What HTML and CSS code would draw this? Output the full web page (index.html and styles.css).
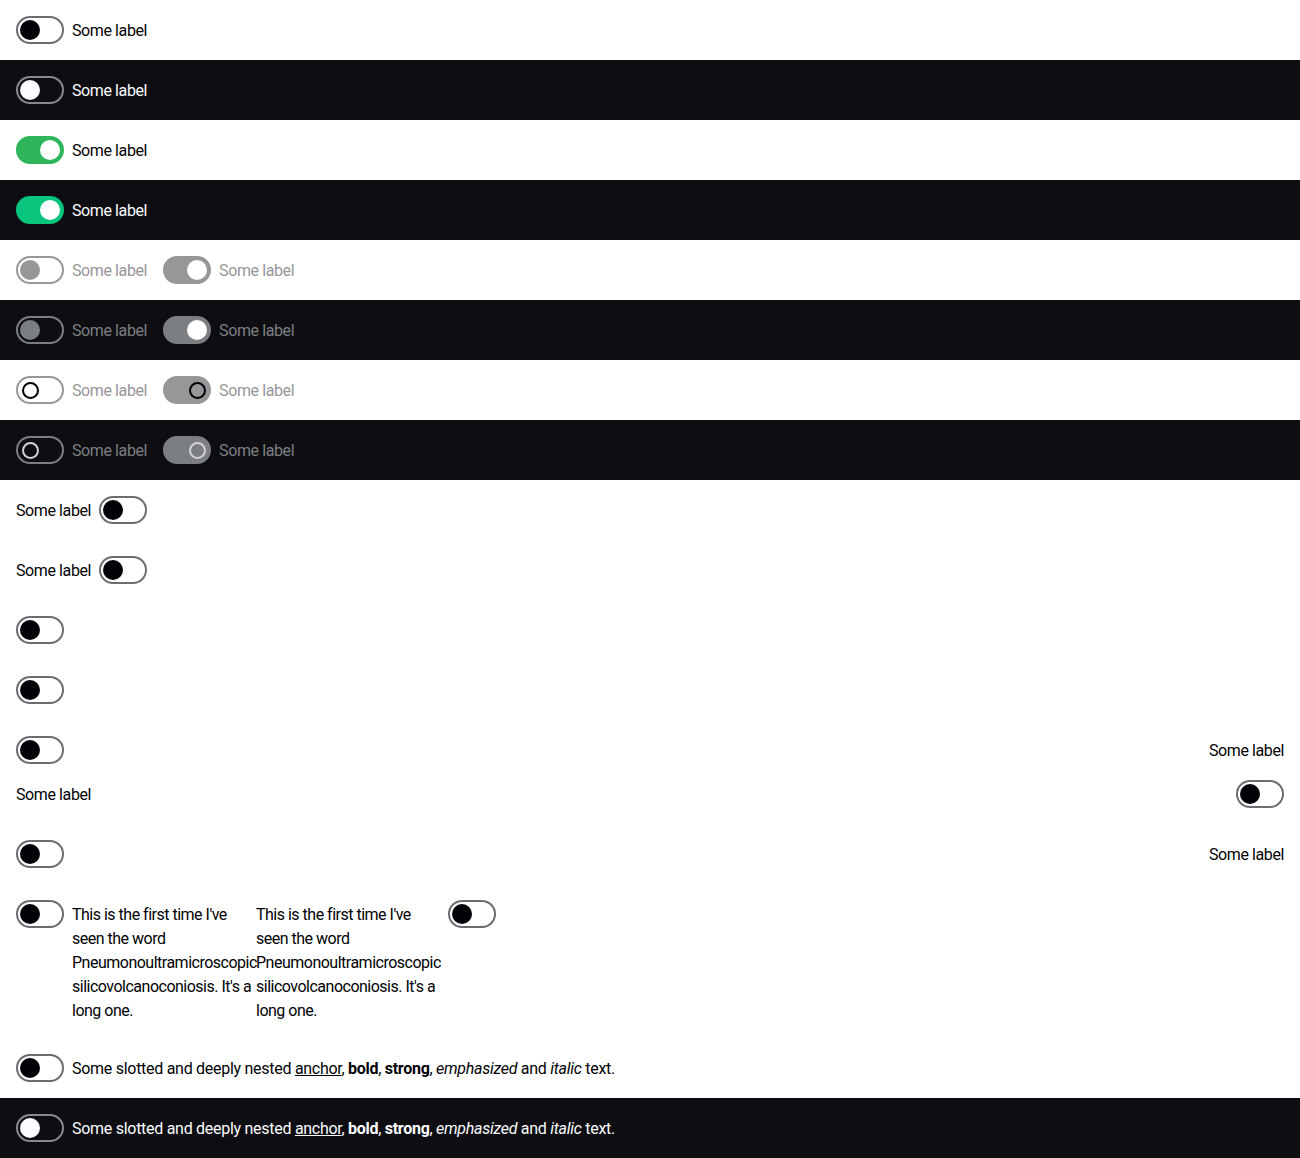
FILE: index.html
```html
<!DOCTYPE html>
<html lang="en">
<head>
<meta charset="utf-8">
<title>Switch</title>
<link rel="stylesheet" href="styles.css">
</head>
<body>
<div class="sec light">
  <label class="toggle"><span class="switch"><span class="knob"></span></span><span class="lbl">Some label</span></label>
</div>
<div class="sec dark">
  <label class="toggle"><span class="switch"><span class="knob"></span></span><span class="lbl">Some label</span></label>
</div>
<div class="sec light">
  <label class="toggle"><span class="switch on"><span class="knob"></span></span><span class="lbl">Some label</span></label>
</div>
<div class="sec dark">
  <label class="toggle"><span class="switch on"><span class="knob"></span></span><span class="lbl">Some label</span></label>
</div>
<div class="sec light">
  <label class="toggle disabled"><span class="switch"><span class="knob"></span></span><span class="lbl">Some label</span></label>
  <label class="toggle disabled"><span class="switch on"><span class="knob"></span></span><span class="lbl">Some label</span></label>
</div>
<div class="sec dark">
  <label class="toggle disabled"><span class="switch"><span class="knob"></span></span><span class="lbl">Some label</span></label>
  <label class="toggle disabled"><span class="switch on"><span class="knob"></span></span><span class="lbl">Some label</span></label>
</div>
<div class="sec light">
  <label class="toggle disabled loading"><span class="switch"><span class="knob"></span></span><span class="lbl">Some label</span></label>
  <label class="toggle disabled loading"><span class="switch on"><span class="knob"></span></span><span class="lbl">Some label</span></label>
</div>
<div class="sec dark">
  <label class="toggle disabled loading"><span class="switch"><span class="knob"></span></span><span class="lbl">Some label</span></label>
  <label class="toggle disabled loading"><span class="switch on"><span class="knob"></span></span><span class="lbl">Some label</span></label>
</div>
<div class="sec light">
  <label class="toggle"><span class="lbl">Some label</span><span class="switch"><span class="knob"></span></span></label>
</div>
<div class="sec light">
  <label class="toggle"><span class="lbl">Some label</span><span class="switch"><span class="knob"></span></span></label>
</div>
<div class="sec light">
  <label class="toggle" aria-label="Some label"><span class="switch"><span class="knob"></span></span></label>
</div>
<div class="sec light">
  <label class="toggle" aria-label="Some label"><span class="switch"><span class="knob"></span></span></label>
</div>
<div class="sec light col">
  <label class="toggle stretch"><span class="switch"><span class="knob"></span></span><span class="lbl">Some label</span></label>
  <label class="toggle stretch"><span class="lbl">Some label</span><span class="switch"><span class="knob"></span></span></label>
</div>
<div class="sec light">
  <label class="toggle stretch"><span class="switch"><span class="knob"></span></span><span class="lbl">Some label</span></label>
</div>
<div class="sec light tight">
  <label class="toggle"><span class="switch"><span class="knob"></span></span><span class="lbl narrow">This is the first time I've seen the word Pneumonoultramicroscopic silicovolcanoconiosis. It's a long one.</span></label>
  <label class="toggle"><span class="lbl narrow">This is the first time I've seen the word Pneumonoultramicroscopic silicovolcanoconiosis. It's a long one.</span><span class="switch"><span class="knob"></span></span></label>
</div>
<div class="sec light">
  <label class="toggle"><span class="switch"><span class="knob"></span></span><span class="lbl rich">Some slotted and deeply nested <a href="#">anchor</a>, <b>bold</b>, <strong>strong</strong>, <em>emphasized</em> and <i>italic</i> text.</span></label>
</div>
<div class="sec dark">
  <label class="toggle"><span class="switch"><span class="knob"></span></span><span class="lbl rich">Some slotted and deeply nested <a href="#">anchor</a>, <b>bold</b>, <strong>strong</strong>, <em>emphasized</em> and <i>italic</i> text.</span></label>
</div>
</body>
</html>
```

FILE: styles.css
```css
html, body {
  margin: 0;
  padding: 0;
  background: #ffffff;
}
body {
  font-family: Roboto, "Liberation Sans", Arial, sans-serif;
  font-size: 16px;
  line-height: 24px;
  letter-spacing: -0.4px;
}
.sec {
  display: flex;
  gap: 16px;
  padding: 16px;
  align-items: flex-start;
}
.sec.col {
  flex-direction: column;
}
.sec.tight {
  gap: 0;
}
.light {
  background: #ffffff;
  color: #010205;
  --border: #6b6d70;
  --knob: #010205;
  --on: #2fb65b;
  --onknob: #ffffff;
  --dis: #969799;
  --ring: #010205;
}
.dark {
  background: #0e0e12;
  color: #fbfcff;
  --border: #88898c;
  --knob: #fbfcff;
  --on: #09c47d;
  --onknob: #ffffff;
  --dis: #7c7f81;
  --ring: #d0d1d2;
}
.toggle {
  display: flex;
  align-items: flex-start;
  gap: 8px;
  cursor: pointer;
}
.toggle.stretch {
  flex: 1;
  justify-content: space-between;
  width: 100%;
}
.lbl {
  padding-top: 3px;
  margin-bottom: -1px;
  white-space: nowrap;
}
.lbl.narrow {
  white-space: normal;
  width: 184px;
  min-width: 184px;
  letter-spacing: -0.5px;
}
.lbl.rich {
  letter-spacing: -0.28px;
}
.lbl a {
  color: inherit;
  text-decoration: underline;
}
.switch {
  box-sizing: border-box;
  flex: none;
  width: 48px;
  height: 28px;
  border: 2px solid var(--border);
  border-radius: 14px;
  display: flex;
  align-items: center;
  padding: 0 2px;
}
.knob {
  width: 20px;
  height: 20px;
  border-radius: 50%;
  background: var(--knob);
  box-sizing: border-box;
  display: flex;
  align-items: center;
  justify-content: center;
}
.switch.on {
  background: var(--on);
  border-color: var(--on);
  justify-content: flex-end;
}
.switch.on .knob {
  background: var(--onknob);
}
.disabled {
  cursor: default;
}
.disabled .lbl {
  color: var(--dis);
}
.disabled .switch {
  border-color: var(--dis);
}
.disabled .knob {
  background: var(--dis);
}
.disabled .switch.on {
  background: var(--dis);
}
.disabled .switch.on .knob {
  background: #ffffff;
}
.loading .knob,
.loading .switch.on .knob {
  background: transparent;
}
.loading .knob::before {
  content: "";
  width: 17px;
  height: 17px;
  box-sizing: border-box;
  border-radius: 50%;
  border: 2px solid var(--ring);
}
```
